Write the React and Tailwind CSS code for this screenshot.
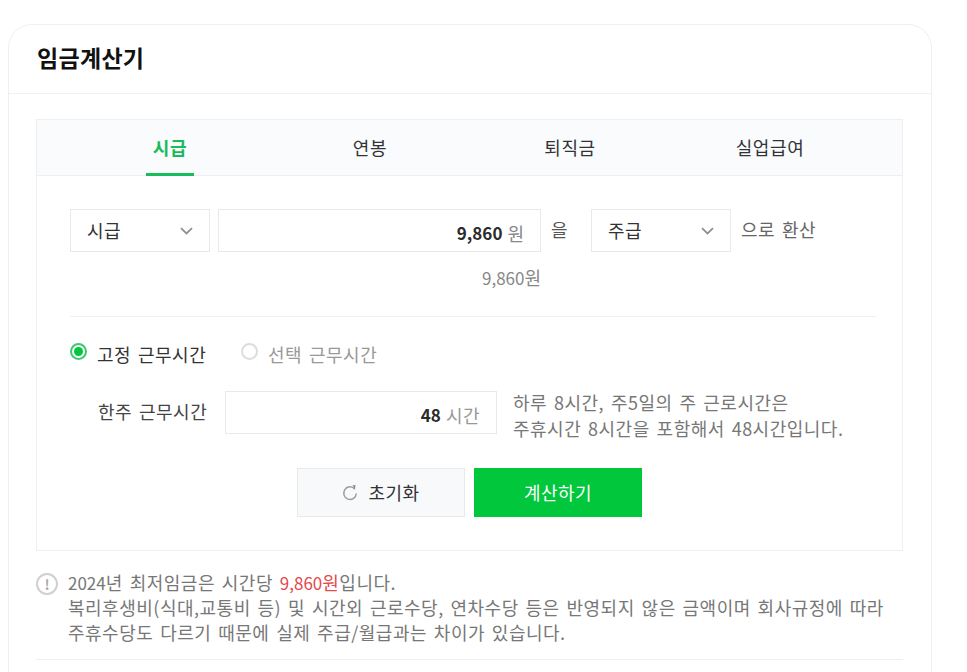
import React from "react";

const Body = "text-[18px] tracking-[0.5px] [word-spacing:2.3px]";

function Chevron() {
  return (
    <svg width="13" height="8" viewBox="0 0 13 8" fill="none" className="shrink-0">
      <path d="M1 1.2L6.5 6.4L12 1.2" stroke="#8f8f8f" strokeWidth="1.8" />
    </svg>
  );
}

function Select({ label }) {
  return (
    <div className="flex h-[43px] w-[140px] shrink-0 items-center justify-between border border-[#e8e9eb] bg-white pl-4 pr-[16px] text-[18px] tracking-[0.5px] text-[#333]">
      <span>{label}</span>
      <Chevron />
    </div>
  );
}

export default function App() {
  return (
    <div className="h-[672px] w-[967px] overflow-hidden bg-white pl-2 pt-6 font-['Noto_Sans_CJK_KR','Noto_Sans',sans-serif]">
      <div className="h-[700px] w-[924px] rounded-t-[24px] border border-[#eeeff1]">
        <div className="flex h-[69px] items-center border-b border-[#f0f1f3] pl-7">
          <h1 className="pb-[3px] text-[23px] font-bold leading-none tracking-[0.3px] text-[#111]">임금계산기</h1>
        </div>
        <div className="pl-[27px] pr-[28px] pt-[25px]">
          <div className="h-[432px] border border-[#eeeff1]">
            <div className="flex h-[56px] justify-center border-b border-[#eeeff1] bg-[#f9fbfd] text-[18px] tracking-[0.6px] text-[#333]">
              {["시급", "연봉", "퇴직금", "실업급여"].map((t, i) => (
                <div key={t} className="flex w-[200px] justify-center">
                  <div
                    className={
                      i === 0
                        ? "flex h-[56px] w-[48px] items-center justify-center whitespace-nowrap border-b-[3px] border-[#16bd5a] pl-[1px] pt-[2px] font-bold text-[#16bd5a]"
                        : "flex h-[56px] items-center justify-center pb-[1px] pl-[1px]"
                    }
                  >
                    {t}
                  </div>
                </div>
              ))}
            </div>
            <div className="px-[33px] pt-[33px]">
              <div className="flex items-center">
                <Select label="시급" />
                <div className="ml-2 flex h-[43px] w-[323px] items-center justify-end border border-[#e8e9eb] bg-white pr-4 pt-[5px] text-[17px]">
                  <span className="font-bold text-[#2b2b2b]">9,860</span>
                  <span className="ml-[5px] text-[18px] text-[#888]">원</span>
                </div>
                <span className="ml-[10px] mr-[23px] w-[17px] shrink-0 pb-[2px] text-[18px] text-[#555]">을</span>
                <Select label="주급" />
                <span className={`ml-[10px] pb-[2px] text-[#666] ${Body}`}>으로 환산</span>
              </div>
              <div className="mt-[12px] w-[471px] text-right text-[17px] leading-[26px] text-[#888]">
                9,860<span className="text-[18px]">원</span>
              </div>
              <div className="mt-[25px] w-[806px] border-t border-[#eeeff1]" />
              <div className={`mt-[25px] flex h-[26px] items-center ${Body}`}>
                <span className="mb-[8px] flex h-[17px] w-[17px] shrink-0 items-center justify-center rounded-full border-2 border-[#3cc96f] bg-white">
                  <span className="h-[9px] w-[9px] rounded-full bg-[#00c73c]" />
                </span>
                <span className="mb-[1px] ml-[10px] w-[110px] whitespace-nowrap text-[#333]">고정 근무시간</span>
                <span className="mb-[8px] ml-[34px] h-[17px] w-[17px] shrink-0 rounded-full border-2 border-[#ddd] bg-white" />
                <span className="mb-[1px] ml-[10px] whitespace-nowrap text-[#999]">선택 근무시간</span>
              </div>
              <div className="mt-[23px] flex items-start">
                <span className={`ml-[28px] w-[127px] shrink-0 whitespace-nowrap pt-[7px] leading-[26px] text-[#444] ${Body}`}>한주 근무시간</span>
                <div className="flex h-[43px] w-[272px] shrink-0 items-center justify-end border border-[#e8e9eb] pr-4 pt-[5px] text-[17px]">
                  <span className="font-bold text-[#2b2b2b]">48</span>
                  <span className="ml-[5px] text-[18px] tracking-[0.5px] text-[#999]">시간</span>
                </div>
                <p className={`-mt-[2px] ml-4 whitespace-nowrap leading-[26px] text-[#777] ${Body}`}>
                  하루 8시간, 주5일의 주 근로시간은
                  <br />
                  주휴시간 8시간을 포함해서 48시간입니다.
                </p>
              </div>
              <div className="mt-[27px] flex justify-center gap-[9px]">
                <button className={`flex h-[49px] w-[168px] items-center justify-center border border-[#e8e9eb] bg-[#f8f9fb] text-[#333] ${Body}`}>
                  <svg width="16" height="17" viewBox="0 0 16 17" fill="none" className="mr-[10px]">
                    <path d="M12.9 5.2A6.3 6.3 0 1 0 14.3 9.5" stroke="#9c9c9c" strokeWidth="1.5" />
                    <path d="M10.6 0.8L13.6 1.6L12.8 5.2Z" fill="#8a8a8a" />
                  </svg>
                  초기화
                </button>
                <button className={`h-[49px] w-[168px] bg-[#00c73c] text-white ${Body}`}>계산하기</button>
              </div>
            </div>
          </div>
          <div className="mt-[19px] flex">
            <span className="mt-[3px] flex h-[22px] w-[22px] shrink-0 items-center justify-center rounded-full border-2 border-[#d0d0d0] text-[14px] font-bold leading-none text-[#aaa]">!</span>
            <p className={`ml-[10px] whitespace-nowrap leading-[25px] text-[#777] ${Body}`}>
              <span className="text-[17px] tracking-normal">2024</span>년 최저임금은 시간당{" "}
              <span className="text-[#e5484d]">
                <span className="text-[17px] tracking-normal">9,860</span>원
              </span>
              입니다.
              <br />
              복리후생비(식대,교통비 등) 및 시간외 근로수당, 연차수당 등은 반영되지 않은 금액이며 회사규정에 따라
              <br />
              주휴수당도 다르기 때문에 실제 주급/월급과는 차이가 있습니다.
            </p>
          </div>
          <div className="mt-[14px] border-t border-[#eeeff1]" />
        </div>
      </div>
    </div>
  );
}
